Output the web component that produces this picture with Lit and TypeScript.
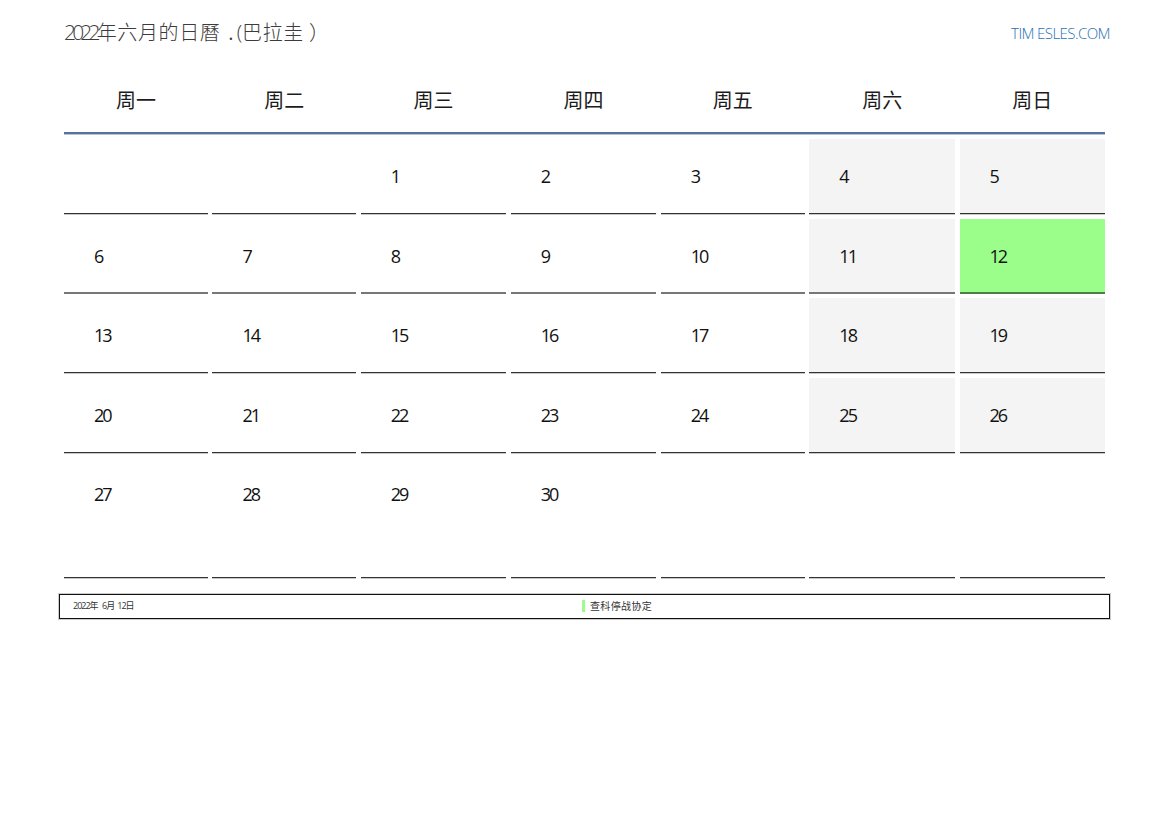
import { LitElement, html, css } from "lit";
import { customElement } from "lit/decorators.js";

const WEEK = ["周一", "周二", "周三", "周四", "周五", "周六", "周日"];
const DAYS: (number | null)[] = [
  null, null, 1, 2, 3, 4, 5,
  6, 7, 8, 9, 10, 11, 12,
  13, 14, 15, 16, 17, 18, 19,
  20, 21, 22, 23, 24, 25, 26,
  27, 28, 29, 30, null, null, null,
];

@customElement("app-root")
export class AppRoot extends LitElement {
  static styles = css`
    :host {
      display: block;
      width: 1169px;
      height: 827px;
      background: #fff;
      font-family: "Open Sans", "Noto Sans CJK SC", sans-serif;
      color: #000;
      overflow: hidden;
    }
    .page {
      display: flex;
      flex-direction: column;
      padding: 0 59px;
    }
    .top {
      display: flex;
      justify-content: space-between;
      align-items: center;
      height: 65px;
      padding-left: 5px;
      box-sizing: border-box;
    }
    .title {
      display: flex;
      align-items: center;
      font-size: 20px;
      line-height: 27px;
      color: #3c3c3c;
      font-weight: 300;
      white-space: pre;
    }
    .t-num { font-size: 21px; letter-spacing: -3.8px; }
    .t-cjk { letter-spacing: 0.6px; }
    .t-dot { margin-left: 8px; font-weight: 400; }
    .t-open { margin-left: 3px; margin-right: 0; }
    .t-close { margin-left: 5px; }
    .site {
      display: flex;
      font-size: 15px;
      line-height: 20px;
      color: #2472b4;
      letter-spacing: -0.55px;
      font-weight: 300;
    }
    .site-head { margin-right: 3px; }
    .cal {
      margin-left: 5px;
      width: 1041px;
      display: flex;
      flex-direction: column;
    }
    .week,
    .grid {
      display: grid;
      grid-template-columns: 143.8px 143.8px 145.4px 145.4px 144px 145.6px 145.4px;
      column-gap: 4.6px;
    }
    .week {
      height: 67px;
      border-bottom: 2px solid #54749e;
      box-shadow: 0 1px 0 #b4c3d8;
      margin-bottom: 5px;
    }
    .wd {
      font-size: 20px;
      line-height: 27px;
      text-align: center;
      padding-top: 22px;
      font-weight: 400;
      color: #1c1c1c;
    }
    .grid {
      grid-template-rows: 75px 75px 75px 75px 120.5px;
      row-gap: 4.5px;
    }
    .cell {
      border-bottom: 1px solid #333;
      box-shadow: 0 1px 0 #c8c8c8;
      box-sizing: border-box;
      padding: 25px 0 0 30px;
      font-size: 18px;
      line-height: 24px;
      letter-spacing: -2px;
      color: #111;
    }
    .soft { border-bottom: 2px solid #777; box-shadow: none; }
    .weekend { background: #f4f4f4; }
    .today { background: #9bfd8a; border-bottom-color: #4f7f46; }
    .foot {
      margin-top: 16px;
      height: 25.5px;
      border: 1px solid #111;
      box-shadow: 0 0 0 1px rgba(0, 0, 0, 0.2);
      box-sizing: border-box;
      display: flex;
      align-items: center;
      font-size: 10px;
      line-height: 14px;
      color: #333;
      width: 1051px;
      padding-left: 13px;
    }
    .date { display: flex; width: 509px; white-space: pre; font-size: 9px; }
    .d-num { letter-spacing: -1px; }
    .d-year { margin-right: 3.5px; }
    .d-month { margin-right: 2px; }
    .mark {
      width: 3px;
      height: 12px;
      background: #9bfd8a;
      margin-right: 5px;
    }
    .note { letter-spacing: 0.35px; }
  `;

  render() {
    return html`<div class="page">
      <div class="top">
        <div class="title">
          <span class="t-num">2022</span><span class="t-cjk">年六月的日曆</span><span class="t-dot">.</span><span class="t-open">(</span><span class="t-cjk">巴拉圭</span><span class="t-close">）</span>
        </div>
        <div class="site"><span class="site-head">TIM</span><span>ESLES.COM</span></div>
      </div>
      <div class="cal">
        <div class="week">${WEEK.map((w) => html`<div class="wd">${w}</div>`)}</div>
        <div class="grid">
          ${DAYS.map((d, i) => {
            const row = Math.floor(i / 7);
            const cls = [
              "cell",
              row === 1 ? "soft" : "",
              d === 12 ? "today" : i % 7 >= 5 && d !== null ? "weekend" : "",
            ].join(" ");
            return html`<div class=${cls}>${d ?? ""}</div>`;
          })}
        </div>
      </div>
      <div class="foot">
        <div class="date"><span class="d-num">2022</span><span class="d-year">年</span><span class="d-num">6</span><span class="d-month">月</span><span class="d-num">12</span><span>日</span></div>
        <div class="mark"></div>
        <div class="note">查科停战协定</div>
      </div>
    </div>`;
  }
}
